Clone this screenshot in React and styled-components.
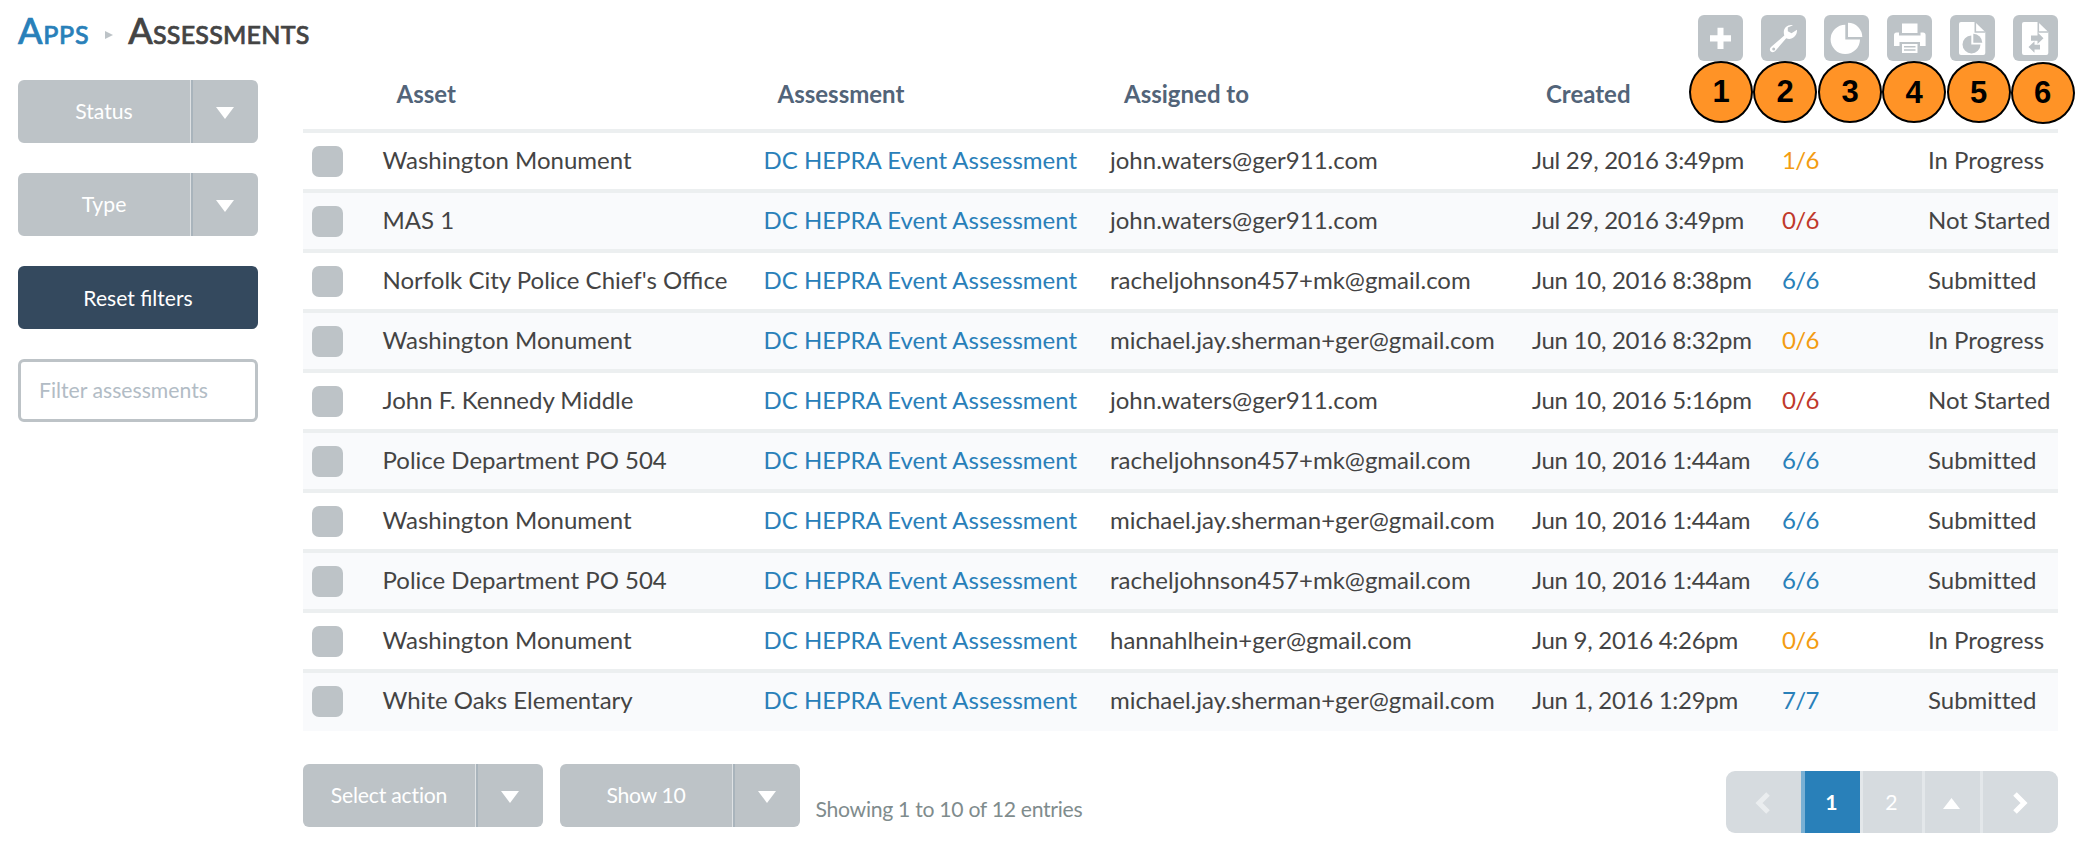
import React from "react";
import styled, { createGlobalStyle } from "styled-components";

const Global = createGlobalStyle`
  * { box-sizing: border-box; }
  body { margin: 0; background: #fff; color: #444; font-family: Lato, "Liberation Sans", sans-serif; }
  button, input { font-family: inherit; margin: 0; }
`;

const Page = styled.div`
  position: relative;
  width: 2076px;
  height: 859px;
  padding: 0 18px;
  overflow: hidden;
`;

const TopBar = styled.header`
  display: flex;
  justify-content: space-between;
  height: 80px;
`;

const Breadcrumb = styled.h1`
  display: flex;
  align-items: center;
  height: 61px;
  margin: 0;
  font-size: 36px;
  font-weight: 500;
  font-variant: small-caps;
  letter-spacing: 0.25px;
  line-height: 61px;
  -webkit-text-stroke: 0.7px currentColor;
`;

const CrumbLink = styled.a`
  color: #2980b9;
  letter-spacing: 0.7px;
`;

const CrumbArrow = styled.svg`
  width: 8px;
  height: 8px;
  margin: 8px 15px 0 16px;
  fill: #bdc3c7;
`;

const Toolbar = styled.div`
  display: flex;
  gap: 18px;
  padding-top: 15px;
`;

const ToolButton = styled.button`
  width: 45px;
  height: 45.5px;
  padding: 0;
  border: 0;
  border-radius: 6px;
  background: #bdc3c7;
  color: #fff;
  svg { display: block; }
`;

const Body = styled.div`
  display: flex;
  gap: 45px;
`;

const Sidebar = styled.aside`
  display: flex;
  flex-direction: column;
  gap: 30px;
  width: 240px;
`;

const SplitButton = styled.div`
  display: flex;
  width: 240px;
  height: 63px;
  border-radius: 6px;
  overflow: hidden;
  background: #bdc3c7;
  color: #fff;
  font-size: 21.2px;
  letter-spacing: ${(p) => p.$tracking || 0}px;
  font-variant-ligatures: no-common-ligatures;
`;

const SplitLabel = styled.span`
  width: 173px;
  line-height: 63px;
  text-align: center;
  border-right: 1px solid #dfe2e4;
`;

const SplitToggle = styled.span`
  display: flex;
  align-items: center;
  justify-content: center;
  flex: 1;
  padding: 3px 2px 0 0;
  border-left: 2px solid #a9b4bc;
`;

const ResetButton = styled.button`
  height: 63px;
  padding: 0 0 1px;
  border: 0;
  border-radius: 6px;
  background: #34495e;
  color: #fff;
  font-size: 21.1px;
`;

const FilterInput = styled.input`
  width: 240px;
  height: 63px;
  padding: 0 18px 2px;
  border: 3px solid #bdc3c7;
  border-radius: 6px;
  outline: 0;
  font-size: 21.2px;
  &::placeholder { color: #b2bcc5; opacity: 1; }
`;

const Main = styled.main`
  width: 1755px;
`;

const gridColumns = "79.5px 381px 346.5px 422px 250px 146px 130px";

const HeadRow = styled.div`
  display: grid;
  grid-template-columns: ${gridColumns};
  height: 49px;
  color: #526479;
  font-size: 24px;
  font-weight: 700;
  line-height: 28px;
`;

const HeadCell = styled.span`
  padding-left: 14px;
`;

const Row = styled.div`
  display: grid;
  grid-template-columns: ${gridColumns};
  align-items: center;
  height: ${(p) => (p.$last ? 62 : 60)}px;
  padding-bottom: ${(p) => (p.$last ? 2 : 0)}px;
  border-top: 4px solid #eceff0;
  background: ${(p) => (p.$striped ? "#f9fafc" : "#fff")};
  font-size: 24px;
  line-height: 56px;
  white-space: nowrap;
`;

const Checkbox = styled.span`
  width: 31px;
  height: 31px;
  margin: 1px 0 0 9px;
  border-radius: 7px;
  background: #bdc3c7;
`;

const Cell = styled.span`
  height: 56px;
  line-height: 54px;
  color: ${(p) => p.$color || "#444"};
  letter-spacing: ${(p) => p.$tracking || 0}px;
  font-variant-ligatures: ${(p) => (p.$plain ? "no-common-ligatures" : "normal")};
`;

const Footer = styled.footer`
  display: flex;
  gap: 17px;
  margin-top: 33px;
`;

const Summary = styled.span`
  margin: 31px 0 0 -1.5px;
  color: #7f8c8d;
  font-size: 21.2px;
  letter-spacing: -0.3px;
  line-height: 28px;
`;

const Pager = styled.nav`
  display: flex;
  width: 332px;
  height: 62px;
  margin: 7px 0 0 auto;
  border-radius: 9px;
  overflow: hidden;
`;

const PageButton = styled.span`
  display: flex;
  align-items: center;
  justify-content: center;
  width: ${(p) => p.$width}px;
  padding: 0 2px 1px 0;
  border-left: ${(p) => p.$edge || "3px solid #e3e7ea"};
  background: ${(p) => (p.$active ? "#2980b9" : "#d6dbdf")};
  color: ${(p) => (p.$faded ? "#eaedef" : "#fff")};
  font-size: 21.2px;
  font-weight: ${(p) => (p.$active ? 700 : 400)};
  svg { margin-top: 3px; }
`;

const Badge = styled.span`
  position: absolute;
  left: ${(p) => p.$x - 32}px;
  top: ${(p) => p.$y - 31}px;
  width: 64px;
  height: 62px;
  border: 2px solid #000;
  border-radius: 50%;
  background: #ff9326;
  color: #000;
  font: 700 31px/${(p) => p.$line || 58}px "Liberation Sans", Arial, sans-serif;
  text-align: center;
`;

const Down = () => (
  <svg width="18" height="12" viewBox="0 0 18 12" fill="#fff"><path d="M0 0H18L9 12Z" /></svg>
);

const Split = ({ children, tracking }) => (
  <SplitButton $tracking={tracking}>
    <SplitLabel>{children}</SplitLabel>
    <SplitToggle><Down /></SplitToggle>
  </SplitButton>
);

const G = "#bdc3c7";
const page = (
  <>
    <path d="M11 7H25L35.3 17V38Q35.3 40 33.3 40H11Q9 40 9 38V9Q9 7 11 7Z" />
    <path d="M25.3 7V17H35.3" fill="none" stroke={G} strokeWidth="1.6" />
  </>
);
const icons = [
  <path key="i" d="M19.5 12.7H25.5V20.3H33V26.5H25.5V34H19.5V26.5H12V20.3H19.5Z" />,
  <path key="i" fillRule="evenodd" d="M32 10.2C27.5 8.8 22.6 12.4 22.8 17.4Q22.8 19 23.3 20.4L10.3 31.7C8.4 33.3 8.6 35.4 9.8 36.5C11.3 37.7 13.2 37.3 14.5 35.8L25.2 23.2C30 25.7 36.5 21.5 36 14.8L30.5 18.2L26.8 16.2V12.6ZM12.7 32.6A1.5 1.5 0 1 1 12.7 35.6A1.5 1.5 0 1 1 12.7 32.6Z" />,
  <g key="i"><path d="M21.3 9.7V24.5H36A14.7 14.7 0 1 1 21.3 9.7Z" /><path d="M24 7.7A14.3 14.3 0 0 1 38.3 22H24Z" /></g>,
  <g key="i"><path d="M15 8.5H30.5V18H15Z" /><path d="M7 20Q7 17.5 9.5 17.5H12V20.5H33.5V17.5H36Q38.6 17.5 38.6 20V31H33V27H12.5V31H7Z" /><path d="M15 29H30.5V38H15Z" /><path d="M17 31.8H28.5M17 35H28.5" stroke={G} strokeWidth="1.4" /></g>,
  <g key="i">{page}<g fill={G}><path d="M21.3 20.4V29.5H30.5A9 9 0 1 1 21.3 20.4Z" /><path d="M23.3 18.8A9 9 0 0 1 32.3 27.8H23.3Z" /></g></g>,
  <g key="i">{page}<path fill={G} d="M18 20.6H24.5V17.3L30.5 23.2L24.5 29V25.7H18ZM27 29.7H21.5V26.3L15.5 32L21.5 37.8V34.4H27Z" /></g>,
];

const badges = [[1721, 92], [1785, 92], [1850, 92], [1914, 92, 60], [1978.5, 92, 60], [2042.5, 93]];

const orange = "#f39c12";
const red = "#c0392b";
const blue = "#2980b9";
const rows = [
  ["Washington Monument", "john.waters@ger911.com", "Jul 29, 2016 3:49pm", "1/6", orange, "In Progress"],
  ["MAS 1", "john.waters@ger911.com", "Jul 29, 2016 3:49pm", "0/6", red, "Not Started"],
  ["Norfolk City Police Chief's Office", "racheljohnson457+mk@gmail.com", "Jun 10, 2016 8:38pm", "6/6", blue, "Submitted"],
  ["Washington Monument", "michael.jay.sherman+ger@gmail.com", "Jun 10, 2016 8:32pm", "0/6", orange, "In Progress"],
  ["John F. Kennedy Middle", "john.waters@ger911.com", "Jun 10, 2016 5:16pm", "0/6", red, "Not Started"],
  ["Police Department PO 504", "racheljohnson457+mk@gmail.com", "Jun 10, 2016 1:44am", "6/6", blue, "Submitted"],
  ["Washington Monument", "michael.jay.sherman+ger@gmail.com", "Jun 10, 2016 1:44am", "6/6", blue, "Submitted"],
  ["Police Department PO 504", "racheljohnson457+mk@gmail.com", "Jun 10, 2016 1:44am", "6/6", blue, "Submitted"],
  ["Washington Monument", "hannahlhein+ger@gmail.com", "Jun 9, 2016 4:26pm", "0/6", orange, "In Progress"],
  ["White Oaks Elementary", "michael.jay.sherman+ger@gmail.com", "Jun 1, 2016 1:29pm", "7/7", blue, "Submitted"],
];

export default function App() {
  return (
    <Page>
      <Global />
      <TopBar>
        <Breadcrumb>
          <CrumbLink>Apps</CrumbLink>
          <CrumbArrow viewBox="0 0 8 8"><path d="M0 0L8 4L0 8Z" /></CrumbArrow>
          <span>Assessments</span>
        </Breadcrumb>
        <Toolbar>
          {icons.map((icon, i) => (
            <ToolButton key={i}>
              <svg width="45" height="45" viewBox="0 0 45 45" fill="#fff">{icon}</svg>
            </ToolButton>
          ))}
        </Toolbar>
      </TopBar>
      <Body>
        <Sidebar>
          <Split>Status</Split>
          <Split>Type</Split>
          <ResetButton>Reset filters</ResetButton>
          <FilterInput placeholder="Filter assessments" />
        </Sidebar>
        <Main>
          <HeadRow>
            <span />
            <HeadCell>Asset</HeadCell>
            <HeadCell>Assessment</HeadCell>
            <HeadCell>Assigned to</HeadCell>
            <HeadCell>Created</HeadCell>
          </HeadRow>
          {rows.map(([asset, who, created, score, color, status], i) => (
            <Row key={i} $striped={i % 2 === 1} $last={i === rows.length - 1}>
              <Checkbox />
              <Cell>{asset}</Cell>
              <Cell $color={blue}>DC HEPRA Event Assessment</Cell>
              <Cell>{who}</Cell>
              <Cell $tracking={-0.28}>{created}</Cell>
              <Cell $color={color} $tracking={-0.6}>{score}</Cell>
              <Cell $plain>{status}</Cell>
            </Row>
          ))}
          <Footer>
            <Split tracking={-0.2}>Select action</Split>
            <Split tracking={-0.3}>Show 10</Split>
            <Summary>Showing 1 to 10 of 12 entries</Summary>
            <Pager>
              <PageButton $width={75} $edge="0" $faded>
                <svg width="16" height="22" viewBox="0 0 16 22" fill="none" stroke="currentColor" strokeWidth="5"><path d="M13 2L4 11L13 20" /></svg>
              </PageButton>
              <PageButton $width={59} $edge="4px solid #79b0d4" $active>1</PageButton>
              <PageButton $width={62}>2</PageButton>
              <PageButton $width={58}>
                <svg width="17" height="11" viewBox="0 0 17 11" fill="currentColor"><path d="M0 11L8.5 0L17 11Z" /></svg>
              </PageButton>
              <PageButton $width={78}>
                <svg width="16" height="22" viewBox="0 0 16 22" fill="none" stroke="currentColor" strokeWidth="5"><path d="M3 2L12 11L3 20" /></svg>
              </PageButton>
            </Pager>
          </Footer>
        </Main>
      </Body>
      {badges.map(([x, y, line], i) => <Badge key={i} $x={x} $y={y} $line={line}>{i + 1}</Badge>)}
    </Page>
  );
}
